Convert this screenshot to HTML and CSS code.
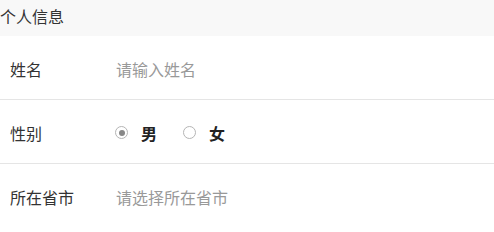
FILE: index.html
```html
<!DOCTYPE html>
<html>
<head>
  <meta charset="UTF-8">
  <title>个人信息</title>
  <link rel="stylesheet" href="styles.css">
</head>
<body>
  <div class="section-title">个人信息</div>

  <div class="form">
    <div class="form-row">
      <div class="label">姓名</div>
      <input class="field" type="text" placeholder="请输入姓名">
    </div>

    <div class="form-row">
      <div class="label">性别</div>
      <div class="radio-group">
        <label class="radio checked"><span class="dot"></span><span class="radio-text">男</span></label>
        <label class="radio"><span class="dot"></span><span class="radio-text">女</span></label>
      </div>
    </div>

    <div class="form-row">
      <div class="label">所在省市</div>
      <div class="picker">请选择所在省市</div>
    </div>
  </div>
</body>
</html>
```

FILE: styles.css
```css
/* Base styles */
* {
  margin: 0;
  padding: 0;
  box-sizing: border-box;
}

body {
  font-family: "Noto Sans CJK SC", "Noto Sans", sans-serif;
  color: #333;
  background: #fff;
}

/* Section header */
.section-title {
  height: 36px;
  line-height: 32px;
  font-size: 16px;
  color: #333;
  background: #f8f8f8;
}

/* Form rows */
.form-row {
  display: flex;
  align-items: center;
  height: 64px;
  padding-left: 10px;
  padding-top: 2px;
  border-bottom: 1px solid #e5e5e5;
}

.form-row:last-child {
  border-bottom: none;
}

.label {
  width: 106px;
  font-size: 16px;
  color: #333;
}

.field {
  flex: 1;
  border: none;
  outline: none;
  font-family: inherit;
  font-size: 16px;
  color: #333;
  background: transparent;
}

.field::placeholder,
.picker {
  color: #999;
}

.picker {
  font-size: 16px;
}

/* Radio buttons */
.radio-group {
  display: flex;
  align-items: center;
  gap: 27px;
}

.radio {
  display: flex;
  align-items: center;
  gap: 13px;
}

.dot {
  width: 13px;
  height: 13px;
  border: 1px solid #b5b5b5;
  border-radius: 50%;
  margin-left: -1px;
  position: relative;
}

.radio.checked .dot::after {
  content: "";
  position: absolute;
  top: 2.5px;
  left: 2.5px;
  width: 6px;
  height: 6px;
  border-radius: 50%;
  background: #888;
}

.radio-text {
  font-size: 16px;
  font-weight: bold;
  color: #222;
}
```
